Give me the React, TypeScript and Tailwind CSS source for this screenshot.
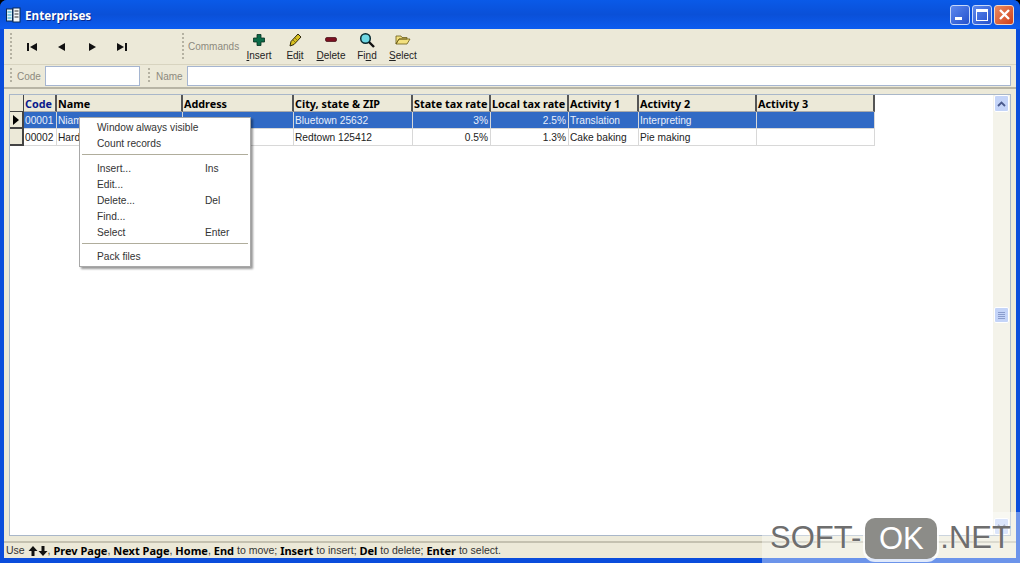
const font = { fontFamily: '"Liberation Sans", Arial, sans-serif' }
const boldFont = { fontFamily: '"Noto Sans", "DejaVu Sans", sans-serif' }

const columns = [
  { name: 'Code', width: 'w-[33px]', color: 'text-[#0a1a8c]' },
  { name: 'Name', width: 'w-[126px]', color: 'text-black' },
  { name: 'Address', width: 'w-[111px]', color: 'text-black' },
  { name: 'City, state & ZIP', width: 'w-[119px]', color: 'text-black' },
  { name: 'State tax rate', width: 'w-[78px]', color: 'text-black' },
  { name: 'Local tax rate', width: 'w-[78px]', color: 'text-black' },
  { name: 'Activity 1', width: 'w-[70px]', color: 'text-black' },
  { name: 'Activity 2', width: 'w-[118px]', color: 'text-black' },
  { name: 'Activity 3', width: 'w-[118px]', color: 'text-black' },
]

const rows = [
  ['00001', 'Niam', '', 'Bluetown 25632', '3%', '2.5%', 'Translation', 'Interpreting', ''],
  ['00002', 'Hard', '', 'Redtown 125412', '0.5%', '1.3%', 'Cake baking', 'Pie making', ''],
]

function Grip({ h }: { h: string }) {
  return <div className={`w-[2px] ${h} shrink-0 bg-[repeating-linear-gradient(to_bottom,#b5b2a2_0,#b5b2a2_2px,transparent_2px,transparent_4px)]`} />
}

function NavIcon({ d }: { d: string }) {
  return (
    <div className="flex w-[30px] justify-center">
      <svg width="10" height="8" viewBox="0 0 10 8">
        <path d={d} fill="#111" />
      </svg>
    </div>
  )
}

function CommandButton({ icon, pre, u, post }: { icon: React.ReactNode; pre: string; u: string; post: string }) {
  return (
    <div className="flex w-[36px] flex-col items-center pt-[1px]">
      <div className="flex h-[17px] items-center">{icon}</div>
      <div className="text-[10px] leading-[15px] text-[#222]">
        {pre}
        <span className="underline">{u}</span>
        {post}
      </div>
    </div>
  )
}

function MenuItem({ label, shortcut }: { label: string; shortcut?: string }) {
  return (
    <div className="flex h-[16px] items-center pl-[17px] text-[10.2px] text-[#333]">
      <span className="w-[108px] whitespace-nowrap">{label}</span>
      <span>{shortcut}</span>
    </div>
  )
}

function Strong({ children }: { children: React.ReactNode }) {
  return <b style={boldFont} className="text-[11px] text-black">{children}</b>
}

export default function App() {
  return (
    <div style={font} className="relative h-[563px] w-[1020px] overflow-hidden bg-black">
      <div className="flex h-full flex-col rounded-t-[7px] bg-[#0a4ddc]">
        {/* Title bar */}
        <div className="flex h-[29px] shrink-0 items-center rounded-t-[7px] bg-gradient-to-b from-[#0a5ae8] via-[#0a50d8] to-[#0c5cf0] pl-[6px] pr-[6px]">
          <svg width="15" height="16" viewBox="0 0 15 16">
            <rect x="0.5" y="2" width="6" height="12" fill="#dff2fa" stroke="#0b2a55" />
            <rect x="7" y="1" width="7" height="14" fill="#f4f8fa" stroke="#0b2a55" />
            <path d="M1.5 5h4M1.5 8h4M1.5 11h4" stroke="#2aa5c8" />
            <path d="M8.5 4h4M8.5 7h4M8.5 10h4" stroke="#333" />
          </svg>
          <span style={boldFont} className="ml-[4px] mt-[2px] text-[11.7px] font-bold text-white [text-shadow:1px_1px_#0a2a8c]">Enterprises</span>
          <div className="ml-auto flex gap-[2px]">
            <div className="flex h-[20px] w-[20px] items-end rounded-[3px] border border-[#c8d8f8] bg-gradient-to-br from-[#5d88ee] to-[#2550cc] pb-[4px] pl-[4px]">
              <div className="h-[3px] w-[7px] bg-white" />
            </div>
            <div className="flex h-[20px] w-[20px] items-center justify-center rounded-[3px] border border-[#c8d8f8] bg-gradient-to-br from-[#5d88ee] to-[#2550cc]">
              <div className="h-[12px] w-[12px] border border-t-[3px] border-white" />
            </div>
            <div className="flex h-[20px] w-[20px] items-center justify-center rounded-[3px] border border-[#f0d8c8] bg-gradient-to-br from-[#ea8a60] to-[#cf3c14]">
              <svg width="13" height="13" viewBox="0 0 13 13">
                <path d="M2 2l9 9M11 2l-9 9" stroke="#fff" strokeWidth="2.4" />
              </svg>
            </div>
          </div>
        </div>

        {/* Window body */}
        <div className="mx-[4px] mb-[5px] flex min-h-0 flex-1 flex-col bg-[#ece9d8]">
          {/* Toolbar */}
          <div className="flex h-[36px] shrink-0 items-center border-b border-[#d8d4c0] pl-[6px]">
            <Grip h="h-[28px]" />
            <div className="ml-[5px] flex w-[165px] items-center pt-[1px]">
              <NavIcon d="M0 0h2v8H0zM10 0v8L3 4z" />
              <NavIcon d="M8 0v8L1 4z" />
              <NavIcon d="M2 0v8l7-4z" />
              <NavIcon d="M0 0v8l7-4zM8 0h2v8H8z" />
            </div>
            <Grip h="h-[28px]" />
            <span className="ml-[4px] w-[53px] text-[10px] text-[#8c8a7e]">Commands</span>
            <CommandButton
              pre=""
              u="I"
              post="nsert"
              icon={
                <svg width="12" height="12" viewBox="0 0 12 12">
                  <path d="M4 0.5h4v3.5h3.5v4H8v3.5H4V8H0.5V4H4z" fill="#0c6b48" stroke="#06301f" strokeWidth="0.8" />
                </svg>
              }
            />
            <CommandButton
              pre="Ed"
              u="i"
              post="t"
              icon={
                <svg width="13" height="14" viewBox="0 0 13 14">
                  <path d="M1 13l1-4.5L9 1l3 3-7 7.5z" fill="#d8c020" stroke="#2e2808" />
                  <path d="M4 7l3 3M6 5l3 3" stroke="#6a5a10" strokeWidth="0.7" />
                </svg>
              }
            />
            <CommandButton
              pre=""
              u="D"
              post="elete"
              icon={
                <svg width="12" height="7" viewBox="0 0 12 7">
                  <rect x="0.5" y="1.5" width="11" height="4" rx="1.5" fill="#7c1020" stroke="#3e0810" strokeWidth="0.7" />
                </svg>
              }
            />
            <CommandButton
              pre="Fi"
              u="n"
              post="d"
              icon={
                <svg width="16" height="16" viewBox="0 0 16 16">
                  <circle cx="6.5" cy="6.5" r="4.8" fill="#6fd8e4" stroke="#0a2a30" strokeWidth="1.5" />
                  <path d="M10 10l5 5" stroke="#111" strokeWidth="2.4" />
                </svg>
              }
            />
            <CommandButton
              pre=""
              u="S"
              post="elect"
              icon={
                <svg width="16" height="11" viewBox="0 0 16 11">
                  <path d="M1 10V2h5l1 1.5h5V5H4l-3 5zM1 10h11l3-5H4z" fill="#f2e07e" stroke="#6a5c18" strokeWidth="0.8" />
                </svg>
              }
            />
          </div>

          {/* Search inputs */}
          <div className="flex h-[22px] shrink-0 items-center pl-[6px]">
            <Grip h="h-[16px]" />
            <span className="ml-[5px] w-[28px] text-[10px] text-[#8c8a7e]">Code</span>
            <div className="h-[20px] w-[95px] border border-[#a5b5d0] bg-white" />
            <div className="ml-[8px]">
              <Grip h="h-[16px]" />
            </div>
            <span className="ml-[6px] w-[31px] text-[10px] text-[#8c8a7e]">Name</span>
            <div className="h-[20px] flex-1 border border-[#a5b5d0] bg-white" />
            <div className="w-[5px]" />
          </div>
          <div className="h-[2px] shrink-0 bg-[#b8b5a5]" />
          <div className="h-[5px] shrink-0" />

          {/* Grid panel */}
          <div className="mx-[5px] flex min-h-0 flex-1 border border-[#a9b7c9] bg-white">
            <div className="min-w-0 flex-1">
              <div style={boldFont} className="flex h-[17px] text-[10.8px] font-bold leading-[18px]">
                <div className="w-[14px] border-b border-r border-[#444] bg-[#ece9d8]" />
                {columns.map((c) => (
                  <div key={c.name} className={`${c.width} ${c.color} overflow-hidden whitespace-nowrap border-b border-r-2 border-b-[#aaa] border-r-[#555] bg-[#ece9d8] pl-[1px]`}>
                    {c.name}
                  </div>
                ))}
              </div>
              {rows.map((r, i) => (
                <div key={r[0]} className="flex h-[17px] text-[10.2px] leading-[16px]">
                  <div className="flex w-[14px] items-center justify-center border-b-2 border-r-2 border-[#444] bg-[#ece9d8]">
                    {i === 0 && (
                      <svg width="6" height="10" viewBox="0 0 6 10">
                        <path d="M0 0l6 5-6 5z" fill="#000" />
                      </svg>
                    )}
                  </div>
                  {r.map((v, j) => (
                    <div
                      key={j}
                      className={`${columns[j].width} overflow-hidden whitespace-nowrap border-b border-r border-[#d8d8d8] pl-[1px] pr-[2px] pt-[1px] ${j === 4 || j === 5 ? 'text-right' : ''} ${i === 0 ? 'bg-[#316ac5] text-[#e8eefa]' : 'bg-white text-[#222]'}`}
                    >
                      {v}
                    </div>
                  ))}
                </div>
              ))}
            </div>

            {/* Scrollbar */}
            <div className="flex w-[17px] shrink-0 flex-col items-center bg-[#f4f3ea]">
              <div className="flex h-[17px] w-[15px] items-center justify-center rounded-[2px] border border-white bg-[#c4d4f8]">
                <svg width="9" height="6" viewBox="0 0 9 6">
                  <path d="M1 5l3.5-3.5L8 5" fill="none" stroke="#4a5a8c" strokeWidth="1.8" />
                </svg>
              </div>
              <div className="mt-[195px] flex h-[16px] w-[15px] flex-col items-center justify-center gap-[1px] rounded-[2px] border border-white bg-[#c4d4f8]">
                <div className="h-px w-[7px] bg-[#8a9ccc]" />
                <div className="h-px w-[7px] bg-[#8a9ccc]" />
                <div className="h-px w-[7px] bg-[#8a9ccc]" />
                <div className="h-px w-[7px] bg-[#8a9ccc]" />
              </div>
              <div className="mt-auto flex h-[17px] w-[15px] items-center justify-center rounded-[2px] border border-white bg-[#c4d4f8]">
                <svg width="9" height="6" viewBox="0 0 9 6">
                  <path d="M1 1l3.5 3.5L8 1" fill="none" stroke="#4a5a8c" strokeWidth="1.8" />
                </svg>
              </div>
            </div>
          </div>

          {/* Status bar */}
          <div className="mt-[5px] h-[2px] shrink-0 bg-[#c4c1b0]" />
          <div className="flex h-[15px] shrink-0 items-center whitespace-pre pl-[2px] pt-[1px] text-[10.5px] text-[#333]">
            Use{' '}
            <svg width="20" height="10" viewBox="0 0 20 10">
              <path d="M5 0l4.5 5H6.5v5h-3V5H.5zM15 10l-4.5-5h3V0h3v5h3z" fill="#111" />
            </svg>
            , <Strong>Prev Page</Strong>, <Strong>Next Page</Strong>, <Strong>Home</Strong>, <Strong>End</Strong> to move; <Strong>Insert</Strong> to insert; <Strong>Del</Strong> to delete; <Strong>Enter</Strong> to select.
          </div>
        </div>
      </div>

      {/* Context menu */}
      <div className="absolute left-[79px] top-[117px] h-[150px] w-[172px] border border-[#a8a8a8] bg-white pt-[2px] shadow-[2px_2px_2px_rgba(0,0,0,0.4)]">
        <MenuItem label="Window always visible" />
        <MenuItem label="Count records" />
        <div className="mx-[2px] mb-[6px] mt-[2px] h-px bg-[#b0ad9c]" />
        <MenuItem label="Insert..." shortcut="Ins" />
        <MenuItem label="Edit..." />
        <MenuItem label="Delete..." shortcut="Del" />
        <MenuItem label="Find..." />
        <MenuItem label="Select" shortcut="Enter" />
        <div className="mx-[2px] mb-[5px] mt-[2px] h-px bg-[#b0ad9c]" />
        <MenuItem label="Pack files" />
      </div>

      {/* Watermark */}
      <div className="absolute bottom-0 right-0 flex h-[51px] w-[258px] items-center bg-white/40 pl-[8px] text-[31px] leading-none text-[#6e6e6e] [text-shadow:0_0_2px_#fff]" style={font}>
        <span>SOFT-</span>
        <span className="ml-[4px] mt-[1px] flex h-[41px] w-[72px] items-center justify-center rounded-[10px] bg-[#8c8c88] text-white shadow-[0_1px_0_2px_rgba(255,255,255,0.8)] [text-shadow:none]">OK</span>
        <span className="ml-[3px]">.NET</span>
      </div>
    </div>
  )
}
